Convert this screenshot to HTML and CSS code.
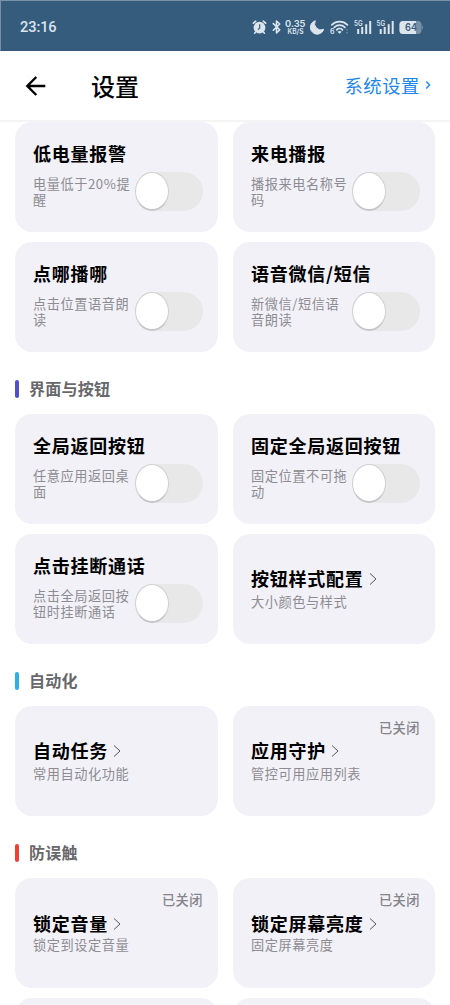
FILE: index.html
```html
<!DOCTYPE html>
<html lang="zh-CN">
<head>
<meta charset="utf-8">
<title>设置</title>
<link rel="stylesheet" href="styles.css">
</head>
<body>
<div class="screen">
  <div class="status">
    <span class="clock">23:16</span>
    <svg class="status-icons" width="174" height="20" viewBox="250 17 174 20">
      <g class="line">
        <path d="M253.400 23.200l2.300-2M265.600 23.200l-2.300-2" stroke-width="1.700"/>
        <path d="M255.600 32l-1 1.300M263.400 32l1 1.300" stroke-width="1.500"/>
        <path d="M273.300 23.600l6.400 6.200-3.200 3v-11.800l3.200 3-6.400 6.200" stroke-width="1.600"/>
        <path d="M331.800 24.800a11 11 0 0 1 15.600 0M334.300 27.400a7.500 7.500 0 0 1 10.600 0M336.700 29.800a4.200 4.200 0 0 1 5.800 0" stroke-width="1.700"/>
      </g>
      <circle cx="259.500" cy="27.600" r="5.900" class="fill"/>
      <path d="M259.700 24.200v3.800l-1.700 1.700" class="hand"/>
      <path d="M315.300 20.800a6.800 6.800 0 1 0 8.400 8.500a6.300 6.300 0 0 1-8.400-8.500z" class="moon"/>
      <path d="M337.400 31.700q2.200-1.500 4.400 0l-2.200 2z" class="fill"/>
      <text x="285" y="26.800" class="speed" textLength="20.500" lengthAdjust="spacingAndGlyphs">0.35</text>
      <text x="287.500" y="33.600" class="unit" textLength="16" lengthAdjust="spacingAndGlyphs">KB/S</text>
      <text x="330" y="34" class="six">6</text>
      <path d="M347 29v1.500M347 32v1.500" class="dim"/>
      <text x="354" y="25.600" class="fiveg" textLength="8.500" lengthAdjust="spacingAndGlyphs">5G</text>
      <path d="M358.200 29v5M362.200 27v7M366.200 24.300v9.700M370.200 21v13" class="bars"/>
      <text x="376.500" y="25.600" class="fiveg" textLength="8.500" lengthAdjust="spacingAndGlyphs">5G</text>
      <path d="M380.700 29v5M384.700 27v7M388.700 24.300v9.700M392.700 21v13" class="bars"/>
      <rect x="399.500" y="21" width="22" height="13" rx="3.700" class="battery-back"/>
      <path d="M403 21h13v13h-13a3.500 3.500 0 0 1-3.500-3.500v-6a3.500 3.500 0 0 1 3.500-3.500z" class="fill"/>
      <path d="M422 25.200a3 3 0 0 1 0 4.600z" class="battery-back"/>
      <text x="405" y="31.300" class="level" textLength="12" lengthAdjust="spacingAndGlyphs">64</text>
    </svg>
  </div>
  <header class="header">
    <svg class="back" width="22" height="22" viewBox="0 0 22 22"><path d="M20.300 11H2.500M11.300 2L2.300 11l9 9"/></svg>
    <h1>设置</h1>
    <a class="system">系统设置<svg width="6" height="10" viewBox="0 0 6 10"><path d="M1.300 1.500L4.600 5 1.300 8.500"/></svg></a>
  </header>
  <main class="content">
    <section class="grid">
      <article class="card"><h3>低电量报警</h3><div class="row"><p>电量低于20%提醒</p><span class="toggle"></span></div></article>
      <article class="card"><h3>来电播报</h3><div class="row"><p>播报来电名称号码</p><span class="toggle"></span></div></article>
      <article class="card"><h3>点哪播哪</h3><div class="row"><p>点击位置语音朗读</p><span class="toggle"></span></div></article>
      <article class="card"><h3>语音微信/短信</h3><div class="row"><p>新微信/短信语音朗读</p><span class="toggle"></span></div></article>
    </section>
    <h2 class="indigo"><span>界面与按钮</span></h2>
    <section class="grid">
      <article class="card"><h3>全局返回按钮</h3><div class="row"><p>任意应用返回桌面</p><span class="toggle"></span></div></article>
      <article class="card"><h3>固定全局返回按钮</h3><div class="row"><p>固定位置不可拖动</p><span class="toggle"></span></div></article>
      <article class="card"><h3>点击挂断通话</h3><div class="row"><p>点击全局返回按钮时挂断通话</p><span class="toggle"></span></div></article>
      <article class="card link"><h3>按钮样式配置<svg class="chevron" width="8" height="14" viewBox="0 0 8 14"><path d="M1 1.500L7 7 1 12.500"/></svg></h3><p>大小颜色与样式</p></article>
    </section>
    <h2 class="sky"><span>自动化</span></h2>
    <section class="grid">
      <article class="card link"><h3>自动任务<svg class="chevron" width="8" height="14" viewBox="0 0 8 14"><path d="M1 1.500L7 7 1 12.500"/></svg></h3><p>常用自动化功能</p></article>
      <article class="card link"><span class="state">已关闭</span><h3>应用守护<svg class="chevron" width="8" height="14" viewBox="0 0 8 14"><path d="M1 1.500L7 7 1 12.500"/></svg></h3><p>管控可用应用列表</p></article>
    </section>
    <h2 class="red"><span>防误触</span></h2>
    <section class="grid">
      <article class="card link tight"><span class="state">已关闭</span><h3>锁定音量<svg class="chevron" width="8" height="14" viewBox="0 0 8 14"><path d="M1 1.500L7 7 1 12.500"/></svg></h3><p>锁定到设定音量</p></article>
      <article class="card link tight"><span class="state">已关闭</span><h3>锁定屏幕亮度<svg class="chevron" width="8" height="14" viewBox="0 0 8 14"><path d="M1 1.500L7 7 1 12.500"/></svg></h3><p>固定屏幕亮度</p></article>
      <article class="card"></article>
      <article class="card"></article>
    </section>
  </main>
</div>
</body>
</html>
```
FILE: styles.css
```css
*, *::before { box-sizing: border-box; }
body { margin: 0; background: #fff; overflow: hidden; }
h1, h2, h3, p { margin: 0; }
svg { display: block; flex: none; }
.screen {
  width: 450px; height: 1005px; overflow: hidden;
  display: flex; flex-direction: column;
  font-family: "Noto Sans CJK SC", sans-serif; color: #000;
}
.status {
  flex: none; height: 51px; padding: 3px 26px 0 19px;
  display: flex; align-items: center; justify-content: space-between;
  background: #365c7d; border-top: 1px solid #7891a7; border-left: 1px solid #7891a7; border-bottom: 1px solid #355779;
}
.clock { font: 500 14.600px/20px Roboto, sans-serif; color: #dce4ed; letter-spacing: -0.1px; }
.line path { fill: none; stroke: #dce4ed; stroke-linecap: round; stroke-linejoin: round; }
.fill { fill: #dce4ed; }
.moon { fill: #dce4ed; stroke: #dce4ed; stroke-width: 1; stroke-linejoin: round; }
.hand { fill: none; stroke: #365c7d; stroke-width: 1.2; }
.bars { stroke: #dce4ed; stroke-width: 2; fill: none; }
.dim { stroke: #6985a0; stroke-width: 1.5; }
.battery-back { fill: #7891a7; }
.status-icons text { fill: #dce4ed; font-family: Inter, sans-serif; font-weight: 600; }
.status-icons .speed { font-size: 9.5px; }
.status-icons .unit { font-size: 7px; }
.status-icons .six { font-size: 7px; }
.status-icons .fiveg { font-size: 7px; }
.status-icons .level { font-size: 10px; fill: #365c7d; }
.header {
  flex: none; height: 71px; padding: 0 19px 0 25px;
  display: flex; align-items: center; border-bottom: 2px solid #f4f4f5;
}
.back path { fill: none; stroke: #000; stroke-width: 2.4; }
.header h1 { margin-left: 44px; font-size: 24px; line-height: 36px; font-weight: 500; }
.system {
  margin-left: auto; display: flex; align-items: center; gap: 5px;
  font-size: 18.300px; line-height: 24px; letter-spacing: 0.6px; color: #1b86ee;
  padding-bottom: 1px;
}
.system path { fill: none; stroke: #1b86ee; stroke-width: 1.4; }
.content { padding: 0 15px; }
.grid { display: grid; grid-template-columns: 203px 202px; column-gap: 15px; grid-auto-rows: 110px; row-gap: 10px; }
.card { position: relative; background: #f2f1f7; border-radius: 17px; padding: 19px 15px 0 18px; }
.card h3 {
  display: flex; align-items: center; gap: 5px;
  font-size: 18px; line-height: 24px; font-weight: 700; letter-spacing: 0.75px; white-space: nowrap;
}
.card p { font-size: 13.2px; line-height: 16px; letter-spacing: 0.55px; color: #8d8c92; }
.row { display: flex; justify-content: space-between; margin-top: 7px; }
.row p { width: 98px; margin-top: 4px; margin-right: -1px; }
.toggle { flex: none; width: 68px; height: 39px; border-radius: 20px; background: #e8e8e8; display: flex; }
.toggle::before {
  content: ""; width: 34px; height: 39px; border-radius: 50%; background: #fff;
  border: 1px solid #d0d0d1; border-bottom: 2px solid #c6c6c8;
}
.link { padding-top: 32px; }
.link p { margin-top: 4px; }
.tight { padding-top: 33px; }
.tight p { margin-top: 2px; }
.chevron { position: relative; top: 1px; }
.chevron path { fill: none; stroke: #555; stroke-width: 1; }
.state {
  position: absolute; top: 12px; right: 15px;
  font-size: 13.200px; line-height: 20px; letter-spacing: 0.5px; font-weight: 500; color: #858489;
}
h2 {
  height: 62px; padding-top: 12px;
  display: flex; align-items: center; gap: 10px;
  font-size: 16px; line-height: 24px; font-weight: 700; letter-spacing: 0.25px; color: #68676b;
}
h2 span { padding-bottom: 2px; }
h2::before { content: ""; width: 4px; height: 18px; border-radius: 2px; background: currentColor; }
.indigo::before { background: #514fd0; }
.sky::before { background: #32ade6; }
.red::before { background: #f43d37; }
```
